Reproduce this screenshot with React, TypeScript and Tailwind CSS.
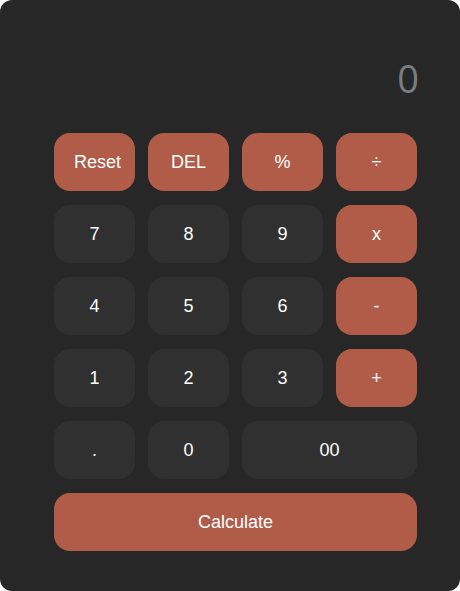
const keys: { label: string; kind: 'op' | 'num'; span?: string }[] = [
  { label: 'Reset', kind: 'op' },
  { label: 'DEL', kind: 'op' },
  { label: '%', kind: 'op' },
  { label: '÷', kind: 'op' },
  { label: '7', kind: 'num' },
  { label: '8', kind: 'num' },
  { label: '9', kind: 'num' },
  { label: 'x', kind: 'op' },
  { label: '4', kind: 'num' },
  { label: '5', kind: 'num' },
  { label: '6', kind: 'num' },
  { label: '-', kind: 'op' },
  { label: '1', kind: 'num' },
  { label: '2', kind: 'num' },
  { label: '3', kind: 'num' },
  { label: '+', kind: 'op' },
  { label: '.', kind: 'num' },
  { label: '0', kind: 'num' },
  { label: '00', kind: 'num', span: 'col-span-2' },
  { label: 'Calculate', kind: 'op', span: 'col-span-4' },
];

export default function App() {
  return (
    <div className="w-[460px] h-[591px] bg-white">
      <div className="h-full rounded-[12px] bg-[#272727] pl-[54px] pr-[43px] pt-[56px] font-['Liberation_Sans',Arial,sans-serif]">
        {/* Display */}
        <div className="h-[44px] -mr-[2px] text-right text-[38px] leading-[44px] text-[#7b7d80] font-['Open_Sans',sans-serif]">
          0
        </div>

        {/* Keypad */}
        <div className="mt-[33px] grid grid-cols-4 gap-x-[13px] gap-y-[14px]">
          {keys.map((k) => (
            <button
              key={k.label}
              className={`h-[58px] rounded-[16px] text-[18px] text-white ${
                k.kind === 'op' ? 'bg-[#b05c48]' : 'bg-[#303030]'
              } ${k.span ?? ''} ${k.label === 'Reset' ? 'pl-[6px]' : ''}`}
            >
              {k.label}
            </button>
          ))}
        </div>
      </div>
    </div>
  );
}
